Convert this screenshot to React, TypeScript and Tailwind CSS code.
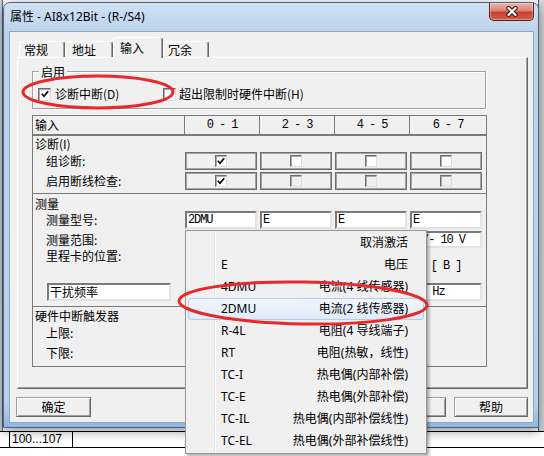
import React from "react";

const cols = "grid grid-cols-[152px_75px_75px_75px_76px]";
const mono = "font-['Liberation_Mono','Noto_Sans_CJK_SC',monospace] text-[12px] tracking-[-1.1px]";
const menuFont = "font-['Noto_Sans','Noto_Sans_CJK_SC',sans-serif]";

const menuItems: [string, string][] = [
  ["", "取消激活"],
  ["E", "电压"],
  ["4DMU", "电流(4 线传感器)"],
  ["2DMU", "电流(2 线传感器)"],
  ["R-4L", "电阻(4 导线端子)"],
  ["RT", "电阻(热敏，线性)"],
  ["TC-I", "热电偶(内部补偿)"],
  ["TC-E", "热电偶(外部补偿)"],
  ["TC-IL", "热电偶(内部补偿线性)"],
  ["TC-EL", "热电偶(外部补偿线性)"],
];

function Tick() {
  return (
    <svg width="8" height="8" viewBox="0 0 8 8" className="block">
      <path d="M0.8 3.8 L3 6.2 L7.2 1.2" fill="none" stroke="#000" strokeWidth="1.7" />
    </svg>
  );
}

function CheckBox({ checked = false, disabled = false, large = false }) {
  return (
    <span
      className={[
        "flex shrink-0 items-center justify-center border border-t-[#6d6d6d] border-l-[#6d6d6d] border-r-[#dcdcdc] border-b-[#dcdcdc] shadow-[inset_1px_1px_0_#a8a8a8]",
        large ? "h-[13px] w-[13px]" : "h-[12px] w-[12px]",
        disabled ? "bg-[#f0f0f0]" : "bg-white",
      ].join(" ")}
    >
      {checked && <Tick />}
    </span>
  );
}

function BoxCell({ children }: { children?: React.ReactNode }) {
  return (
    <div className="flex h-[18px] w-[72px] items-center justify-center border border-[#6d6d6d] shadow-[inset_0_0_0_1px_#a5a5a5]">
      {children}
    </div>
  );
}

function Field({ children, wide = false, pad = "pl-[1px]" }: { children?: React.ReactNode; wide?: boolean; pad?: string }) {
  return (
    <div
      className={[
        "h-full overflow-hidden whitespace-nowrap border-2 border-t-[#7a7a7a] border-l-[#7a7a7a] border-r-[#e3e3e3] border-b-[#e3e3e3] bg-white",
        wide ? "ml-[14px] w-[124px] leading-[13px]" : "w-[72px] leading-[14px] " + mono,
        pad,
      ].join(" ")}
    >
      {children}
    </div>
  );
}

function Button({ label, w = "w-[75px]" }: { label?: string; w?: string }) {
  return (
    <div
      className={`${w} flex h-[20px] items-center justify-center border border-[#a0a0a0] border-r-[#696969] border-b-[#696969] bg-[#f0f0f0] shadow-[inset_1px_1px_0_#fff,inset_-1px_-1px_0_#a0a0a0]`}
    >
      {label}
    </div>
  );
}

export default function App() {
  return (
    <div className="relative h-[456px] w-[544px] overflow-hidden bg-white text-[12px] text-black font-['Noto_Sans_CJK_SC',sans-serif]">
      {/* spreadsheet behind the dialog */}
      <div className="flex h-full flex-col">
        <div className="flex h-[431px]">
          <div className="w-[3px] border-r border-[#5c6470] bg-[#c5d2de]" />
          <div className="flex-1" />
          <div className="w-[6px] border-l border-[#50565e] bg-[#d3d6da]" />
        </div>
        <div className="flex h-[17px] border-y border-black font-['Liberation_Sans',sans-serif] text-[12px]">
          <div className="w-[10px] border-r border-black" />
          <div className="w-[63px] border-r border-black pl-[2px] leading-[15px]">100...107</div>
        </div>
      </div>

      {/* dialog window */}
      <div className="absolute left-[3px] top-[2px] flex h-[426px] w-[536px] flex-col rounded-t-[7px] border border-[#4f6480] bg-[linear-gradient(to_bottom,#cfe1f3_0px,#bdd4ed_28px,#b8d0eb_400px,#8fb5e2_100%)] pb-[4px] pl-[5px] pr-[4px] shadow-[0_3px_12px_rgba(0,0,0,0.45)]">
        <div className="flex h-[28px]">
          <div className={`self-center pl-[1px] leading-[16px] ${menuFont}`}>属性 - AI8x12Bit - (R-/S4)</div>
          <div className="ml-auto flex h-[18px] w-[45px] items-center justify-center rounded-b-[5px] border border-t-0 border-[#5a1f1a] bg-[linear-gradient(to_bottom,#ebb8ae_0%,#d98272_45%,#c4412f_55%,#d0604a_100%)] shadow-[inset_0_0_0_1px_rgba(255,255,255,0.35)]">
            <svg width="14" height="11" viewBox="0 0 14 11">
              <path d="M3.5 2 L10.5 9 M10.5 2 L3.5 9" stroke="#3b1814" strokeWidth="4.2" strokeLinecap="round" />
              <path d="M3.5 2 L10.5 9 M10.5 2 L3.5 9" stroke="#fff" strokeWidth="2.2" strokeLinecap="round" />
            </svg>
          </div>
        </div>

        <div className="flex-1 border border-[#8fa6bf] bg-[#f0f0f0] pt-[5px]">
          <div className="ml-[7px] w-[511px]">
            {/* tabs */}
            <div className="flex h-[20px] items-end pl-[2px]">
              <div className="h-[16px] w-[46px] rounded-t-[3px] border border-b-0 border-t-white border-l-white border-r-[#696969] pl-[4px] pt-[1px] leading-[14px] shadow-[inset_-1px_0_0_#a0a0a0]">常规</div>
              <div className="h-[16px] w-[48px] rounded-t-[3px] border border-b-0 border-t-white border-l-white border-r-[#696969] pl-[6px] pt-[1px] leading-[14px] shadow-[inset_-1px_0_0_#a0a0a0]">地址</div>
              <div className="relative z-10 -mb-[1px] h-[21px] w-[50px] rounded-t-[3px] border border-b-0 border-t-white border-l-white border-r-[#696969] bg-[#f0f0f0] pl-[6px] pt-[3px] leading-[14px] shadow-[inset_-1px_0_0_#a0a0a0]">输入</div>
              <div className="h-[16px] w-[46px] rounded-t-[3px] border border-b-0 border-t-white border-l-white border-r-[#696969] pl-[4px] pt-[1px] leading-[14px] shadow-[inset_-1px_0_0_#a0a0a0]">冗余</div>
            </div>

            {/* tab panel */}
            <div className="h-[332px] border border-t-white border-l-white border-r-[#696969] border-b-[#696969] shadow-[inset_-1px_-1px_0_#a0a0a0]">
              {/* group box */}
              <div className="ml-[14px] mt-[13px] h-[38px] w-[454px] border border-[#a0a0a0] shadow-[inset_1px_1px_0_#fff,1px_1px_0_#fff]">
                <div className="-mt-[8px] ml-[6px] w-fit bg-[#f0f0f0] px-[2px] leading-[16px]">启用</div>
                <div className="flex h-[28px] items-center pl-[5px]">
                  <div className="flex w-[125px] items-center gap-[4px]">
                    <CheckBox checked large />
                    <span>诊断中断(D)</span>
                  </div>
                  <div className="flex items-center gap-[3px]">
                    <CheckBox large />
                    <span>超出限制时硬件中断(H)</span>
                  </div>
                </div>
              </div>

              {/* parameter table */}
              <div className="ml-[14px] mt-[6px] flex h-[252px] w-[455px] flex-col border border-[#7a7a7a]">
                <div className={`${cols} h-[20px] border-b-2 border-[#7a7a7a]`}>
                  <div className="border-r border-[#7a7a7a] pl-[2px] leading-[18px]">输入</div>
                  <div className={`border-r border-[#7a7a7a] text-center leading-[18px] ${mono}`}>0 - 1</div>
                  <div className={`border-r border-[#7a7a7a] text-center leading-[18px] ${mono}`}>2 - 3</div>
                  <div className={`border-r border-[#7a7a7a] text-center leading-[18px] ${mono}`}>4 - 5</div>
                  <div className={`text-center leading-[18px] ${mono}`}>6 - 7</div>
                </div>

                {/* diagnostics */}
                <div className="h-[58px] border-b border-[#7a7a7a]">
                  <div className="h-[16px] pl-[2px] leading-[16px]">诊断(I)</div>
                  <div className={`${cols} h-[18px]`}>
                    <div className="pl-[13px] leading-[18px]">组诊断:</div>
                    <BoxCell><CheckBox checked /></BoxCell>
                    <BoxCell><CheckBox /></BoxCell>
                    <BoxCell><CheckBox /></BoxCell>
                    <BoxCell><CheckBox /></BoxCell>
                  </div>
                  <div className={`${cols} mt-[2px] h-[18px]`}>
                    <div className="pl-[13px] leading-[18px]">启用断线检查:</div>
                    <BoxCell><CheckBox checked /></BoxCell>
                    <BoxCell><CheckBox disabled /></BoxCell>
                    <BoxCell><CheckBox disabled /></BoxCell>
                    <BoxCell><CheckBox disabled /></BoxCell>
                  </div>
                </div>

                {/* measurement */}
                <div className="h-[113px] border-b border-[#7a7a7a]">
                  <div className="h-[17px] pl-[2px] pt-[2px] leading-[16px]">测量</div>
                  <div className={`${cols} h-[18px]`}>
                    <div className="pl-[13px] leading-[18px]">测量型号:</div>
                    <Field>2DMU</Field>
                    <Field>E</Field>
                    <Field>E</Field>
                    <Field>E</Field>
                  </div>
                  <div className={`${cols} mt-[2px] h-[17px]`}>
                    <div className="pl-[13px] leading-[17px]">测量范围:</div>
                    <Field />
                    <Field />
                    <Field />
                    <Field pad="pl-[4px]">+/- 10 V</Field>
                  </div>
                  <div className={`${cols} h-[35px]`}>
                    <div className="pl-[13px] leading-[16px]">里程卡的位置:</div>
                    <div />
                    <div />
                    <div />
                    <div className={`w-[72px] pt-[10px] text-center leading-[16px] ${mono}`}>[ B ]</div>
                  </div>
                  <div className={`${cols} h-[18px]`}>
                    <div className="h-[18px]">
                      <Field wide pad="pl-[1px]">干扰频率</Field>
                    </div>
                    <Field />
                    <Field />
                    <Field />
                    <Field pad="pl-[2px]">50 Hz</Field>
                  </div>
                </div>

                {/* hardware interrupt */}
                <div className="flex-1">
                  <div className="mt-[1px] h-[16px] pl-[2px] leading-[16px]">硬件中断触发器</div>
                  <div className={`${cols} h-[18px]`}>
                    <div className="pl-[13px] leading-[18px]">上限:</div>
                  </div>
                  <div className={`${cols} mt-[2px] h-[18px]`}>
                    <div className="pl-[13px] leading-[18px]">下限:</div>
                  </div>
                </div>
              </div>
            </div>
          </div>

          <div className="ml-[6px] mt-[8px] flex w-[512px]">
            <Button label="确定" />
            <div className="flex-1" />
            {/* cancel button, covered by the open list */}
            <Button />
            <div className="ml-[8px]">
              <Button label="帮助" w="w-[74px]" />
            </div>
          </div>
        </div>
      </div>

      {/* open drop-down list */}
      <div className={`absolute left-[185px] top-[230px] w-[242px] border border-[#979797] bg-[#f0f0f0] bg-[linear-gradient(to_right,transparent_28px,#e2e3e3_28px,#e2e3e3_29px,#ffffff_29px,#ffffff_30px,transparent_30px)] py-[1px] text-[12px] shadow-[2px_2px_3px_rgba(0,0,0,0.35)] ${menuFont}`}>
        {menuItems.map(([code, name], i) => (
          <div
            key={name}
            className={[
              "mx-[2px] flex h-[22px] items-center justify-between rounded-[3px] border pl-[32px] pr-[15px]",
              i === 3
                ? "border-[#aeccef] bg-[linear-gradient(to_bottom,#f2f7fd,#e0ebf9)]"
                : "border-transparent",
            ].join(" ")}
          >
            <span>{code}</span>
            <span>{name}</span>
          </div>
        ))}
      </div>

      {/* red annotation marks */}
      <svg className="pointer-events-none absolute left-0 top-0" width="544" height="456">
        <ellipse cx="98" cy="92" rx="75" ry="16" fill="none" stroke="#e8282a" strokeWidth="3" />
        <ellipse cx="303" cy="303" rx="124" ry="21" fill="none" stroke="#e8282a" strokeWidth="3" transform="rotate(1 303 303)" />
      </svg>
    </div>
  );
}
